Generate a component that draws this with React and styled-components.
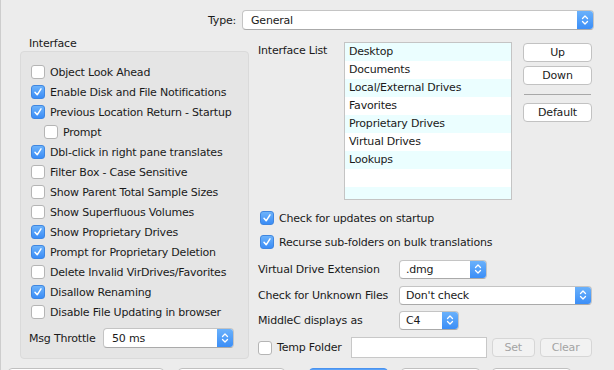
import React from "react";
import styled, { createGlobalStyle } from "styled-components";

const Global = createGlobalStyle`
  html, body { margin: 0; padding: 0; background: #ececec; }
  body { font-family: "DejaVu Sans", "Liberation Sans", sans-serif; font-size: 11px; letter-spacing: -0.2px; color: #1a1a1a; }
  * { box-sizing: border-box; }
`;

const Window = styled.div`
  width: 614px;
  height: 370px;
  overflow: hidden;
  background: #ececec;
  display: flex;
  flex-direction: column;
  border-left: 1px solid #cdcdcd;
`;

const TypeRow = styled.div`
  display: flex;
  align-items: center;
  height: 20px;
  margin-top: 10px;
  gap: 6px;
`;

const Label = styled.span`
  font-size: 11px;
  white-space: nowrap;
  color: #1a1a1a;
  flex: none;
  width: ${(p) => (p.$w ? `${p.$w}px` : "auto")};
  text-align: ${(p) => (p.$right ? "right" : "left")};
  margin-left: ${(p) => p.$ml || 0}px;
`;

const Main = styled.div`
  display: flex;
  margin-top: 7px;
  padding-left: 19px;
`;

const LeftCol = styled.div`
  width: 229px;
  display: flex;
  flex-direction: column;
`;

const GroupTitle = styled.div`
  padding-left: 9px;
  height: 14px;
  line-height: 14px;
`;

const GroupBox = styled.div`
  background: #e5e5e5;
  border: 1px solid #dadada;
  border-radius: 4px;
  height: 308px;
  padding: 10px 0 0 10px;
  display: flex;
  flex-direction: column;
`;

const CheckRow = styled.label`
  display: flex;
  align-items: center;
  height: ${(p) => p.$h || 20}px;
  gap: 5px;
  padding-left: ${(p) => p.$indent || 0}px;
  white-space: nowrap;
`;

const Box = styled.span`
  width: 14px;
  height: 14px;
  border-radius: 3px;
  flex: none;
  display: flex;
  align-items: center;
  justify-content: center;
  background: ${(p) => (p.$on ? "linear-gradient(#6db3fb, #3a8cf6)" : "#fff")};
  border: 1px solid ${(p) => (p.$on ? "#3f86e0" : "#b5b5b5")};
`;

const ThrottleRow = styled.div`
  display: flex;
  align-items: center;
  gap: 9px;
  margin-top: 6px;
  height: 20px;
  margin-left: -2px;
`;

const RightCol = styled.div`
  margin-left: 9px;
  display: flex;
  flex-direction: column;
  width: 336px;
`;

const ListArea = styled.div`
  display: flex;
  margin-top: 5px;
`;

const ListLabel = styled.div`
  width: 86px;
  padding-top: 2px;
`;

const List = styled.div`
  width: 168px;
  height: 158px;
  border: 1px solid #c4c4c4;
  background: repeating-linear-gradient(#ebfeff 0 18px, #ffffff 18px 36px);
  overflow: hidden;
`;

const ListItem = styled.div`
  height: 18px;
  line-height: 18px;
  padding-left: 4px;
`;

const SideButtons = styled.div`
  margin-left: 11px;
  display: flex;
  flex-direction: column;
  width: 69px;
`;

const Btn = styled.div`
  height: 19px;
  border: 1px solid #c2c2c2;
  border-bottom-color: ${(p) => (p.$disabled ? "#d0d0d0" : "#adadad")};
  border-radius: 4px;
  background: ${(p) => (p.$disabled ? "#f2f2f2" : "#fff")};
  color: ${(p) => (p.$disabled ? "#a4a4a4" : "#1a1a1a")};
  border-color: ${(p) => (p.$disabled ? "#d6d6d6" : "#c2c2c2")};
  display: flex;
  align-items: center;
  justify-content: center;
  width: ${(p) => (p.$w ? `${p.$w}px` : "auto")};
  margin-top: ${(p) => p.$mt || 0}px;
  margin-left: ${(p) => p.$ml || 0}px;
  flex: none;
`;

const Sep = styled.div`
  height: 1px;
  background: #a8a8a8;
  margin: 9px 1px 8px 1px;
`;

const RightChecks = styled.div`
  display: flex;
  flex-direction: column;
  margin-top: 11px;
  padding-left: 2px;
  gap: 10px;
`;

const FieldRow = styled.div`
  display: flex;
  align-items: center;
  height: ${(p) => p.$h || 18}px;
  margin-top: ${(p) => p.$mt}px;
`;

const TextField = styled.div`
  width: 136px;
  height: 21px;
  background: #fff;
  border: 1px solid #c8c8c8;
  margin-left: 9px;
  flex: none;
`;

const PopupBox = styled.div`
  width: ${(p) => p.$w}px;
  height: ${(p) => p.$h || 19}px;
  background: #fff;
  border: 1px solid #c4c4c4;
  border-bottom-color: #aaaaaa;
  border-radius: 4px;
  display: flex;
  align-items: center;
  overflow: hidden;
  flex: none;
`;

const PopupText = styled.span`
  flex: 1;
  padding-left: ${(p) => p.$pl || 6}px;
  white-space: nowrap;
`;

const Stepper = styled.span`
  width: 16px;
  align-self: stretch;
  background: linear-gradient(#6ab1fb, #3b8ef7);
  display: flex;
  align-items: center;
  justify-content: center;
`;

const BottomBar = styled.div`
  display: flex;
  margin-top: auto;
  height: 2px;
  padding-left: 7px;
`;

const BottomBtn = styled.div`
  width: ${(p) => p.$w}px;
  margin-left: ${(p) => p.$ml}px;
  height: 20px;
  border: 1px solid ${(p) => (p.$primary ? "#4b93ef" : "#c0c0c0")};
  background: ${(p) => (p.$primary ? "#5aa2f8" : "#fff")};
  border-radius: 4px 4px 0 0;
`;

const Check = () => (
  <svg width="10" height="10" viewBox="0 0 10 10">
    <path d="M2 5.2 L4.2 7.8 L8 1.8" fill="none" stroke="#fff" strokeWidth="1.5" strokeLinecap="round" strokeLinejoin="round" />
  </svg>
);

const CB = ({ on, label, indent, h }) => (
  <CheckRow $indent={indent} $h={h}>
    <Box $on={on}>{on && <Check />}</Box>
    {label && <span>{label}</span>}
  </CheckRow>
);

const Popup = ({ w, h, text, pl }) => (
  <PopupBox $w={w} $h={h}>
    <PopupText $pl={pl}>{text}</PopupText>
    <Stepper>
      <svg width="8" height="12" viewBox="0 0 8 12">
        <path d="M1.5 4.5 L4 2 L6.5 4.5 M1.5 7.5 L4 10 L6.5 7.5" fill="none" stroke="#fff" strokeWidth="1.3" strokeLinecap="round" strokeLinejoin="round" />
      </svg>
    </Stepper>
  </PopupBox>
);

const leftItems = [
  ["Object Look Ahead", false],
  ["Enable Disk and File Notifications", true],
  ["Previous Location Return - Startup", true],
  ["Prompt", false, 13],
  ["Dbl-click in right pane translates", true],
  ["Filter Box - Case Sensitive", false],
  ["Show Parent Total Sample Sizes", false],
  ["Show Superfluous Volumes", false],
  ["Show Proprietary Drives", true],
  ["Prompt for Proprietary Deletion", true],
  ["Delete Invalid VirDrives/Favorites", false],
  ["Disallow Renaming", true],
  ["Disable File Updating in browser", false],
];

const listItems = ["Desktop", "Documents", "Local/External Drives", "Favorites", "Proprietary Drives", "Virtual Drives", "Lookups"];

export default function App() {
  return (
    <>
      <Global />
      <Window>
        <TypeRow>
          <Label $w={235} $right>Type:</Label>
          <Popup w={352} h={20} text="General" pl={8} />
        </TypeRow>
        <Main>
          <LeftCol>
            <GroupTitle>Interface</GroupTitle>
            <GroupBox>
              {leftItems.map(([t, on, ind]) => (
                <CB key={t} label={t} on={on} indent={ind} />
              ))}
              <ThrottleRow>
                <Label $w={65}>Msg Throttle</Label>
                <Popup w={131} h={20} text="50 ms" pl={8} />
              </ThrottleRow>
            </GroupBox>
          </LeftCol>
          <RightCol>
            <ListArea>
              <ListLabel>Interface List</ListLabel>
              <List>
                {listItems.map((t) => (
                  <ListItem key={t}>{t}</ListItem>
                ))}
              </List>
              <SideButtons>
                <Btn $mt={1}>Up</Btn>
                <Btn $mt={4}>Down</Btn>
                <Sep />
                <Btn>Default</Btn>
              </SideButtons>
            </ListArea>
            <RightChecks>
              <CB on label="Check for updates on startup" h={14} />
              <CB on label="Recurse sub-folders on bulk translations" h={14} />
            </RightChecks>
            <FieldRow $mt={11}>
              <Label $w={141}>Virtual Drive Extension</Label>
              <Popup w={88} text=".dmg" />
            </FieldRow>
            <FieldRow $mt={8}>
              <Label $w={141}>Check for Unknown Files</Label>
              <Popup w={193} text="Don't check" />
            </FieldRow>
            <FieldRow $mt={7}>
              <Label $w={141}>MiddleC displays as</Label>
              <Popup w={60} text="C4" />
            </FieldRow>
            <FieldRow $mt={8} $h={21}>
              <CB label="" />
              <Label $ml={5}>Temp Folder</Label>
              <TextField />
              <Btn $disabled $w={43} $ml={5}>Set</Btn>
              <Btn $disabled $w={52} $ml={5}>Clear</Btn>
            </FieldRow>
          </RightCol>
        </Main>
        <BottomBar>
          <BottomBtn $w={156} $ml={0} />
          <BottomBtn $w={107} $ml={14} />
          <BottomBtn $w={79} $ml={24} $primary />
          <BottomBtn $w={79} $ml={13} />
          <BottomBtn $w={79} $ml={12} />
        </BottomBar>
      </Window>
    </>
  );
}
